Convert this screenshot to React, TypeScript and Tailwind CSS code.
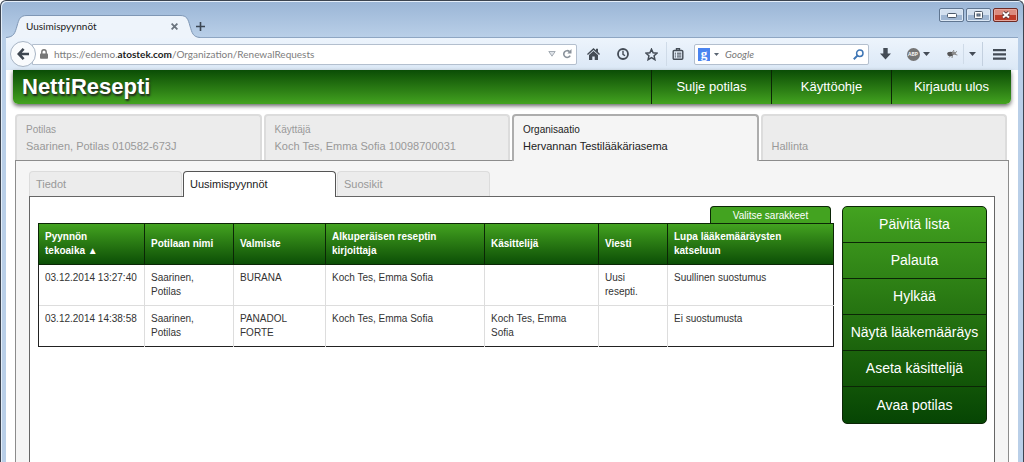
import React, { useState } from 'react';
import clsx from 'clsx';

const menuLinks = ['Sulje potilas', 'Käyttöohje', 'Kirjaudu ulos'];

const mainTabs = [
  { label: 'Potilas', value: 'Saarinen, Potilas 010582-673J' },
  { label: 'Käyttäjä', value: 'Koch Tes, Emma Sofia 10098700031' },
  { label: 'Organisaatio', value: 'Hervannan Testilääkäriasema' },
  { label: '', value: 'Hallinta' },
];

const subTabs = ['Tiedot', 'Uusimispyynnöt', 'Suosikit'];

const columns = [
  { title: 'Pyynnön\ntekoaika ▲', width: 'w-[106px]' },
  { title: 'Potilaan nimi', width: 'w-[89px]' },
  { title: 'Valmiste', width: 'w-[92px]' },
  { title: 'Alkuperäisen reseptin kirjoittaja', width: 'w-[159px]' },
  { title: 'Käsittelijä', width: 'w-[114px]' },
  { title: 'Viesti', width: 'w-[69px]' },
  { title: 'Lupa lääkemääräysten katseluun', width: 'w-[166px]' },
];

const rows = [
  ['03.12.2014 13:27:40', 'Saarinen, Potilas', 'BURANA', 'Koch Tes, Emma Sofia', '', 'Uusi resepti.', 'Suullinen suostumus'],
  ['03.12.2014 14:38:58', 'Saarinen, Potilas', 'PANADOL FORTE', 'Koch Tes, Emma Sofia', 'Koch Tes, Emma Sofia', '', 'Ei suostumusta'],
];

const actions = ['Päivitä lista', 'Palauta', 'Hylkää', 'Näytä lääkemääräys', 'Aseta käsittelijä', 'Avaa potilas'];

function ToolButton({ label, className, children }: { label: string; className?: string; children: React.ReactNode }) {
  return (
    <button type="button" aria-label={label} className={clsx('flex shrink-0 items-center justify-center text-[#444c56]', className)}>
      {children}
    </button>
  );
}

function Caret() {
  return (
    <svg width="7" height="4" viewBox="0 0 7 4" fill="currentColor">
      <path d="M0 0h7L3.5 4z" />
    </svg>
  );
}

function TitleBar() {
  return (
    <div className="flex h-9 items-start justify-between">
      <div className="flex pt-3.5">
        <div className="relative flex h-[23px] w-[194px] items-center justify-between pr-[22px] pl-5">
          <svg className="absolute top-0 left-0" width="194" height="23" viewBox="0 0 194 23">
            <path d="M0 22.5C8 22 9 18 11 11C13 4 14 .5 21 .5H174C181 .5 182 4 184 11C186 18 187 22 194 22.5V23H0z" fill="#eef4fb" />
            <path d="M0 22.5C8 22 9 18 11 11C13 4 14 .5 21 .5H174C181 .5 182 4 184 11C186 18 187 22 194 22.5" fill="none" stroke="#7f97b5" />
          </svg>
          <span className="relative text-[10px] text-[#1a1a1a]">Uusimispyynnöt</span>
          <button type="button" aria-label="Sulje välilehti" className="relative text-[#6b747e]">
            <svg width="7" height="7" viewBox="0 0 7 7" stroke="currentColor" strokeWidth="1.8">
              <path d="M.6 .6l5.8 5.8M6.4 .6L.6 6.4" />
            </svg>
          </button>
        </div>
        <button type="button" aria-label="Uusi välilehti" className="flex h-[23px] w-4 items-center text-[#3b4653]">
          <svg className="-ml-1" width="9" height="9" viewBox="0 0 9 9" stroke="currentColor" strokeWidth="1.6">
            <path d="M4.5 0v9M0 4.5h9" />
          </svg>
        </button>
      </div>
      <div className="flex gap-0.5 pt-[7px]">
        <button type="button" aria-label="Pienennä" className="flex h-3.5 w-[25px] items-center justify-center rounded-[2px] border border-[#5f7590] bg-linear-to-b from-[#d3e0ef] from-50% to-[#9fb6d2] to-50% shadow-[inset_0_0_0_1px_#dce8f5]">
          <svg width="10" height="5" viewBox="0 0 10 5">
            <rect x=".5" y=".5" width="9" height="4" rx="1" fill="#fff" stroke="#4c5a6b" />
          </svg>
        </button>
        <button type="button" aria-label="Suurenna" className="flex h-3.5 w-[25px] items-center justify-center rounded-[2px] border border-[#5f7590] bg-linear-to-b from-[#d3e0ef] from-50% to-[#9fb6d2] to-50% shadow-[inset_0_0_0_1px_#dce8f5]">
          <svg width="9" height="8" viewBox="0 0 9 8">
            <rect x=".5" y=".5" width="8" height="7" rx="1" fill="#fff" stroke="#4c5a6b" />
            <rect x="3" y="3" width="3" height="2" fill="#8ea5c0" stroke="#4c5a6b" />
          </svg>
        </button>
        <button type="button" aria-label="Sulje ikkuna" className="flex h-3.5 w-[25px] items-center justify-center rounded-[2px] border border-[#6e2a24] bg-linear-to-b from-[#dc8b7e] from-50% to-[#bd3a27] to-50% shadow-[inset_0_0_0_1px_#e7a79d]">
          <svg width="10" height="8" viewBox="0 0 10 8">
            <path d="M2 1.5l6 5M8 1.5l-6 5" stroke="#5a3a3a" strokeWidth="3.6" />
            <path d="M2 1.5l6 5M8 1.5l-6 5" stroke="#fff" strokeWidth="2" />
          </svg>
        </button>
      </div>
    </div>
  );
}

function Toolbar() {
  return (
    <div className="flex h-[33px] items-center border-t border-[#8ea6c3] bg-linear-to-b from-[#edf4fc] to-[#dbe8f6] pr-2 pl-1">
      <button type="button" aria-label="Takaisin" className="relative z-10 flex size-[26px] shrink-0 items-center justify-center rounded-full border border-[#a7b4c4] bg-[#f9fbfd] text-[#3e4650]">
        <svg width="12" height="12" viewBox="0 0 12 12" fill="none" stroke="currentColor" strokeWidth="2.6">
          <path d="M6.6 .9L1.8 6l4.8 5.1M2 6h10" />
        </svg>
      </button>
      <label className="-ml-1 flex h-[21px] min-w-0 flex-1 items-center rounded-r-[2px] border border-[#b3bfce] bg-white pl-[7px] text-[10px] text-[#7d7d7d]">
        <svg className="mr-1.5 shrink-0" width="8" height="10" viewBox="0 0 8 10">
          <path d="M1.8 5V3a2.2 2.2 0 0 1 4.4 0v2" fill="none" stroke="#777" strokeWidth="1.4" />
          <rect y="4.4" width="8" height="5.4" rx=".8" fill="#777" />
        </svg>
        <span>https://edemo.</span>
        <span className="font-bold text-[#1c1c1c]">atostek.com</span>
        <input type="text" aria-label="Osoite" defaultValue="/Organization/RenewalRequests" className="min-w-0 flex-1 outline-none" />
        <svg className="mr-1.5 shrink-0" width="8" height="6" viewBox="0 0 8 6" fill="#dfe3e8" stroke="#a4abb3">
          <path d="M.8 .5h6.4L4 5.2z" />
        </svg>
        <button type="button" aria-label="Päivitä" className="mr-1 text-[#8a929b]">
          <svg width="10" height="10" viewBox="0 0 9 10">
            <path d="M7 2.6A3.4 3.4 0 1 0 7.7 6.6" fill="none" stroke="currentColor" strokeWidth="1.6" />
            <path d="M9 0v4.4H4.8z" fill="currentColor" />
          </svg>
        </button>
      </label>
      <ToolButton label="Koti" className="ml-0.5 h-6 w-[29px]">
        <svg width="13" height="12" viewBox="0 0 13 12" fill="currentColor">
          <path d="M6.5 0L0 6l.9 1L6.5 1.9 12.1 7l.9-1-2-1.9V.8H9v1.5z" />
          <path d="M6.5 3L2 7.1V12h3.3V8.5h2.4V12H11V7.1z" />
        </svg>
      </ToolButton>
      <ToolButton label="Historia" className="h-6 w-[29px]">
        <svg width="12" height="12" viewBox="0 0 12 12" fill="none" stroke="currentColor">
          <circle cx="6" cy="6" r="5" strokeWidth="1.8" />
          <path d="M6 2.8V6.3l2 1.4" strokeWidth="1.4" />
        </svg>
      </ToolButton>
      <ToolButton label="Lisää kirjanmerkki" className="h-6 w-[29px]">
        <svg width="13" height="13" viewBox="0 0 13 13" fill="none" stroke="currentColor" strokeWidth="1.5">
          <path d="M6.5 1.2l1.6 3.6 3.9.4-2.9 2.6.8 3.9-3.4-2-3.4 2 .8-3.9L1 5.2l3.9-.4z" />
        </svg>
      </ToolButton>
      <ToolButton label="Kirjanmerkit" className="h-6 w-[22px] border-l border-[#cfdbe8]">
        <svg width="12" height="12" viewBox="0 0 11 12" fill="none" stroke="currentColor">
          <rect x=".7" y="2.5" width="9.6" height="8.8" rx="1" strokeWidth="1.4" />
          <path d="M4 2V.7h3V2" strokeWidth="1.4" />
          <path d="M2.3 5.2h1.2M4.5 5.2h4.3M2.3 7h1.2M4.5 7h4.3M2.3 8.9h1.2M4.5 8.9h4.3" />
        </svg>
      </ToolButton>
      <label className="ml-1.5 flex h-[21px] w-[175px] shrink-0 items-center rounded-[2px] border border-[#b3bfce] bg-white pr-1 pl-[3px] text-[10px]">
        <span className="flex h-[13px] w-3 items-center justify-center bg-[#4a84f0] pb-0.5 font-['Liberation_Serif',serif] text-[13px] leading-none font-bold text-white">g</span>
        <span className="mr-1.5 ml-1 text-[#5a6572]">
          <svg width="5" height="3" viewBox="0 0 7 4" fill="currentColor">
            <path d="M0 0h7L3.5 4z" />
          </svg>
        </span>
        <input type="search" aria-label="Haku" placeholder="Google" className="min-w-0 flex-1 italic outline-none placeholder:text-[#777]" />
        <button type="button" aria-label="Hae" className="text-[#3f76b5]">
          <svg width="11" height="11" viewBox="0 0 11 11" fill="none" stroke="currentColor">
            <circle cx="6.8" cy="4.2" r="3.2" strokeWidth="1.5" />
            <path d="M4.4 6.6L.8 10.2" strokeWidth="2" />
          </svg>
        </button>
      </label>
      <ToolButton label="Lataukset" className="ml-1 h-6 w-[25px]">
        <svg width="11" height="12" viewBox="0 0 11 12" fill="currentColor">
          <path d="M3.3 0h4.4v5.5H11L5.5 11.5 0 5.5h3.3z" />
        </svg>
      </ToolButton>
      <ToolButton label="Adblock Plus" className="ml-1 h-6 w-8 gap-[3px]">
        <span className="flex size-[13px] items-center justify-center rounded-full bg-[#757575] text-[5px] leading-none font-bold text-white">ABP</span>
        <Caret />
      </ToolButton>
      <ToolButton label="Firebug" className="ml-[7px] h-6 w-[22px]">
        <svg width="12" height="10" viewBox="0 0 12 10">
          <path d="M1 4.5l2-.8M3 8.5l1.6-2M6 9l.4-2.4M8 1L6.6 3M11 2.4L8.7 4M11.4 6L9 5.4" stroke="#888" fill="none" />
          <ellipse cx="4.4" cy="5" rx="3" ry="2.2" fill="#555" />
          <ellipse cx="7.8" cy="4.2" rx="2" ry="1.7" fill="#8b8b8b" />
        </svg>
      </ToolButton>
      <ToolButton label="Firebug-valikko" className="h-5 w-[19px] border-l border-[#cfdbe8] pr-0.5">
        <Caret />
      </ToolButton>
      <ToolButton label="Valikko" className="h-6 w-7 border-l border-[#c3d0df] pl-1.5">
        <svg width="13" height="11" viewBox="0 0 13 11" fill="currentColor">
          <path d="M0 0h13v2.2H0zM0 4.3h13v2.2H0zM0 8.6h13v2.2H0z" />
        </svg>
      </ToolButton>
    </div>
  );
}

function RequestTable() {
  return (
    <table className="w-full table-fixed border-collapse border border-[#222] text-left text-[10px] leading-[14px]">
      <colgroup>
        {columns.map(col => (
          <col key={col.title} className={col.width} />
        ))}
      </colgroup>
      <thead>
        <tr className="bg-linear-to-b from-[#43a320] to-[#0a4d06] text-white">
          {columns.map(col => (
            <th key={col.title} className="border border-[#0b2606] py-1.5 pr-3 pl-1.5 font-bold whitespace-pre-line">{col.title}</th>
          ))}
        </tr>
      </thead>
      <tbody className="text-[#333]">
        {rows.map(row => (
          <tr key={row[0]} className="border-b border-[#ddd] last:border-[#222]">
            {row.map((cell, i) => (
              <td key={i} className="border-l border-[#ddd] py-1.5 pr-3 pl-1.5 align-top first:border-[#222] first:whitespace-nowrap">{cell}</td>
            ))}
          </tr>
        ))}
      </tbody>
    </table>
  );
}

export default function App() {
  const [mainTab, setMainTab] = useState(2);
  const [subTab, setSubTab] = useState(1);

  return (
    <div className="flex min-h-screen flex-col rounded-t-md border-x border-t border-[#3c4450] bg-linear-to-b from-[#9ab5d6] to-[#b9cfe8] to-[36px] px-[5px] font-[Lato,'Noto_Sans',sans-serif] shadow-[inset_1px_1px_0_#e4eef9]">
      <TitleBar />
      <Toolbar />
      <div className="flex flex-1 flex-col bg-white px-[7px] font-['Liberation_Sans',Arial,sans-serif]">
        <header className="flex h-[34px] items-stretch justify-between rounded-b-[5px] bg-linear-to-b from-[#0a4d06] to-[#43a320] text-white shadow-[0_2px_4px_#666]">
          <h1 className="pl-[9px] text-[22px] leading-[34px] font-bold [text-shadow:1px_2px_2px_#222]">NettiResepti</h1>
          <nav className="flex">
            {menuLinks.map(link => (
              <a key={link} href="#" className="flex w-[120px] items-center justify-center border-l border-[#0b2606] text-[13px]">{link}</a>
            ))}
          </nav>
        </header>

        <main className="mx-0.5 mt-2.5 flex flex-1 flex-col">
          <nav className="flex gap-0.5 pr-0.5">
            {mainTabs.map((tab, i) => (
              <a
                key={tab.value}
                href="#"
                onClick={() => setMainTab(i)}
                className={clsx(
                  'flex flex-1 flex-col rounded-t-[4px] border-2 border-b-0 px-[9px] pt-1.5',
                  i === mainTab
                    ? 'relative z-10 -mb-px h-[47px] border-[#adadad] bg-[#f5f5f5] text-[#222]'
                    : 'h-[46px] border-[#dcdcdc] bg-[#ececec] text-[#999]'
                )}
              >
                <span className="h-4 text-[10px] leading-4">{tab.label}</span>
                <span className="text-[11px] leading-4">{tab.value}</span>
              </a>
            ))}
          </nav>

          <section className="flex flex-1 flex-col border border-b-0 border-[#8c8c8c] bg-[#f5f5f5] px-[13px] pt-2.5">
            <nav className="flex gap-px">
              {subTabs.map((tab, i) => (
                <a
                  key={tab}
                  href="#"
                  onClick={() => setSubTab(i)}
                  className={clsx(
                    'w-[153px] rounded-t-[4px] border border-b-0 px-1.5 text-[11px] leading-[25px]',
                    i === subTab ? 'relative z-10 -mb-px h-[26px] border-[#555] bg-white text-[#222]' : 'h-[25px] border-[#dcdcdc] bg-[#ececec] text-[#999]'
                  )}
                >
                  {tab}
                </a>
              ))}
            </nav>

            <div className="flex flex-1 items-start gap-2 border border-b-0 border-[#666] bg-white pt-[9px] pr-[7px] pl-2">
              <div className="flex min-w-0 flex-1 flex-col items-end">
                <button type="button" className="mr-[3px] h-[17px] w-[121px] rounded-t-[4px] border border-b-0 border-[#0b2606] bg-[#43a320] text-[10px] text-white">
                  Valitse sarakkeet
                </button>
                <RequestTable />
              </div>
              <div className="flex w-[145px] shrink-0 flex-col divide-y divide-[#0b2606] rounded-[5px] border border-[#0b2606] bg-linear-to-b from-[#43a320] to-[#064504]">
                {actions.map(action => (
                  <button key={action} type="button" className="h-9 text-[14px] whitespace-nowrap text-white">{action}</button>
                ))}
              </div>
            </div>
          </section>
        </main>
      </div>
    </div>
  );
}
